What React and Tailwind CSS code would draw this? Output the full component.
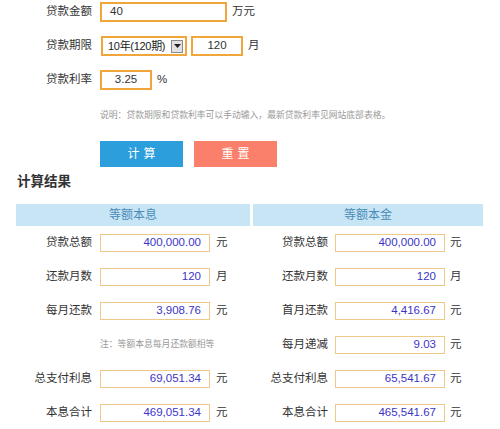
import React from "react";

const font = { fontFamily: '"Liberation Sans", "Noto Sans CJK SC", sans-serif' };

function ResultRow({ label, value, unit, labelW, gap }) {
  return (
    <div className={`flex items-center h-[18px] ${gap}`}>
      <div className={`${labelW} text-right text-[11.5px] text-[#333] whitespace-nowrap`}>{label}</div>
      <div className="w-[110px] h-[18px] border border-[#efc98a] bg-white flex items-center justify-end pr-[8px] text-[11.5px] text-[#3c34c8]">
        {value}
      </div>
      <div className="ml-[-2px] text-[11.5px] text-[#333]">{unit}</div>
    </div>
  );
}

export default function App() {
  return (
    <div className="w-[500px] h-[429px] bg-white overflow-hidden relative" style={font}>
      {/* Form */}
      <div className="flex flex-col gap-[14px] pt-[2px]">
        <div className="flex items-center h-[20px] gap-[8px]">
          <div className="w-[92px] text-right text-[11.5px] text-[#333]">贷款金额</div>
          <div className="w-[127px] h-[20px] border-2 border-[#f0a63a] flex items-center pl-[8px] text-[11.5px] text-[#333]">40</div>
          <div className="ml-[-3px] text-[11.5px] text-[#333]">万元</div>
        </div>
        <div className="flex items-center h-[20px] gap-[8px]">
          <div className="w-[92px] text-right text-[11.5px] text-[#333]">贷款期限</div>
          <div className="w-[86px] h-[20px] ml-[1px] border-2 border-[#f0a63a] flex items-center justify-between pl-[5px] pr-[2px] text-[11px] text-[#222] whitespace-nowrap">
            <span className="tracking-[-0.3px]">10年(120期)</span>
            <span className="w-[12px] h-[13px] border border-[#8a8a8a] bg-[#e2e2e2] flex items-center justify-center shrink-0">
              <svg width="7" height="4" viewBox="0 0 7 4"><path d="M0 0h7L3.5 4z" fill="#222" /></svg>
            </span>
          </div>
          <div className="w-[52px] h-[20px] ml-[-4px] border-2 border-[#f0a63a] flex items-center justify-center text-[11.5px] text-[#333]">120</div>
          <div className="ml-[-3px] text-[11.5px] text-[#333]">月</div>
        </div>
        <div className="flex items-center h-[20px] gap-[8px]">
          <div className="w-[92px] text-right text-[11.5px] text-[#333]">贷款利率</div>
          <div className="w-[52px] h-[20px] border-2 border-[#f0a63a] flex items-center justify-center text-[11.5px] text-[#333]">3.25</div>
          <div className="ml-[-3px] text-[11.5px] text-[#333]">%</div>
        </div>
      </div>

      <div className="pl-[100px] mt-[19px] text-[8.8px] leading-[12px] text-[#999]">
        说明：贷款期限和贷款利率可以手动输入，最新贷款利率见网站底部表格。
      </div>

      <div className="flex gap-[11px] pl-[100px] mt-[20px]">
        <div className="w-[83px] h-[26px] bg-[#2c9edb] text-white text-[12px] flex items-center justify-center tracking-[4px] pl-[4px]">计算</div>
        <div className="w-[83px] h-[26px] bg-[#fa806b] text-white text-[12px] flex items-center justify-center tracking-[4px] pl-[4px]">重置</div>
      </div>

      <div className="pl-[17px] mt-[5px] text-[13.5px] font-bold text-[#333] leading-[20px]">计算结果</div>

      {/* Results */}
      <div className="flex gap-[3px] pl-[16px] mt-[12px]">
        <div className="w-[234px] flex flex-col">
          <div className="h-[22px] bg-[#c8e5f6] flex items-center justify-center text-[12px] text-[#4a8cb8]">等额本息</div>
          <div className="flex flex-col gap-[16px] mt-[8px]">
            <ResultRow label="贷款总额" value="400,000.00" unit="元" labelW="w-[76px]" gap="gap-[8px]" />
            <ResultRow label="还款月数" value="120" unit="月" labelW="w-[76px]" gap="gap-[8px]" />
            <ResultRow label="每月还款" value="3,908.76" unit="元" labelW="w-[76px]" gap="gap-[8px]" />
            <div className="h-[18px] flex items-center pl-[84px] text-[8.8px] text-[#999]">注：等额本息每月还款额相等</div>
            <ResultRow label="总支付利息" value="69,051.34" unit="元" labelW="w-[76px]" gap="gap-[8px]" />
            <ResultRow label="本息合计" value="469,051.34" unit="元" labelW="w-[76px]" gap="gap-[8px]" />
          </div>
        </div>
        <div className="w-[230px] flex flex-col">
          <div className="h-[22px] bg-[#c8e5f6] flex items-center justify-center text-[12px] text-[#4a8cb8]">等额本金</div>
          <div className="flex flex-col gap-[16px] mt-[8px]">
            <ResultRow label="贷款总额" value="400,000.00" unit="元" labelW="w-[75px]" gap="gap-[7px]" />
            <ResultRow label="还款月数" value="120" unit="月" labelW="w-[75px]" gap="gap-[7px]" />
            <ResultRow label="首月还款" value="4,416.67" unit="元" labelW="w-[75px]" gap="gap-[7px]" />
            <ResultRow label="每月递减" value="9.03" unit="元" labelW="w-[75px]" gap="gap-[7px]" />
            <ResultRow label="总支付利息" value="65,541.67" unit="元" labelW="w-[75px]" gap="gap-[7px]" />
            <ResultRow label="本息合计" value="465,541.67" unit="元" labelW="w-[75px]" gap="gap-[7px]" />
          </div>
        </div>
      </div>
    </div>
  );
}
